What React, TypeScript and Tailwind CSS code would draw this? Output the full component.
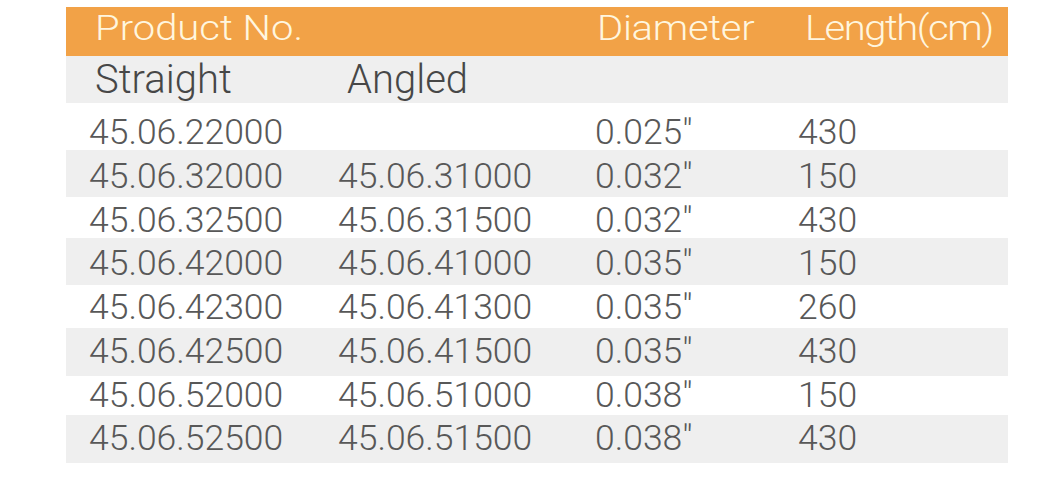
const rows = [
  { straight: "45.06.22000", angled: "", dia: '0.025"', len: "430", box: "h-[47px] pt-[12px]" },
  { straight: "45.06.32000", angled: "45.06.31000", dia: '0.032"', len: "150", box: "h-[47px] pt-[9px]" },
  { straight: "45.06.32500", angled: "45.06.31500", dia: '0.032"', len: "430", box: "h-[41px] pt-[6px]" },
  { straight: "45.06.42000", angled: "45.06.41000", dia: '0.035"', len: "150", box: "h-[47px] pt-[8px]" },
  { straight: "45.06.42300", angled: "45.06.41300", dia: '0.035"', len: "260", box: "h-[43px] pt-[5px]" },
  { straight: "45.06.42500", angled: "45.06.41500", dia: '0.035"', len: "430", box: "h-[48px] pt-[6px]" },
  { straight: "45.06.52000", angled: "45.06.51000", dia: '0.038"', len: "150", box: "h-[39px] pt-[2px]" },
  { straight: "45.06.52500", angled: "45.06.51500", dia: '0.038"', len: "430", box: "h-[48px] pt-[6px]" },
];

export default function App() {
  return (
    <div className="w-[1045px] h-[489px] bg-white pt-[7px] font-['Roboto','Liberation_Sans',sans-serif] font-light">
      <div className="ml-[66px] w-[942px]">
        {/* Orange header */}
        <div className="h-[49px] bg-[#f2a247] grid grid-cols-[272px_257px_203px_1fr] items-start pt-[2px] text-[#fff6df] text-[40px] leading-none">
          <span className="pl-[29px] scale-y-[0.88] origin-center">Product No.</span>
          <span></span>
          <span className="pl-[2px] scale-y-[0.88] tracking-[-0.3px]">Diameter</span>
          <span className="pl-[7px] scale-y-[0.88] tracking-[-1.5px]">Length(cm)</span>
        </div>

        {/* Sub header */}
        <div className="h-[47px] bg-[#efefef] grid grid-cols-[272px_257px_203px_1fr] items-start pt-[4px] text-[#474747] text-[40px] leading-none">
          <span className="pl-[29px]">Straight</span>
          <span className="pl-[9px]">Angled</span>
          <span></span>
          <span></span>
        </div>

        {rows.map((r, i) => (
          <div
            key={r.straight}
            className={`${r.box} ${i % 2 === 1 ? "bg-[#efefef]" : "bg-white"} grid grid-cols-[272px_257px_203px_1fr] items-start text-[#585858] text-[35.5px] leading-none`}
          >
            <span className="pl-[23px]">{r.straight}</span>
            <span>{r.angled}</span>
            <span>{r.dia}</span>
            <span>{r.len}</span>
          </div>
        ))}
      </div>
    </div>
  );
}
